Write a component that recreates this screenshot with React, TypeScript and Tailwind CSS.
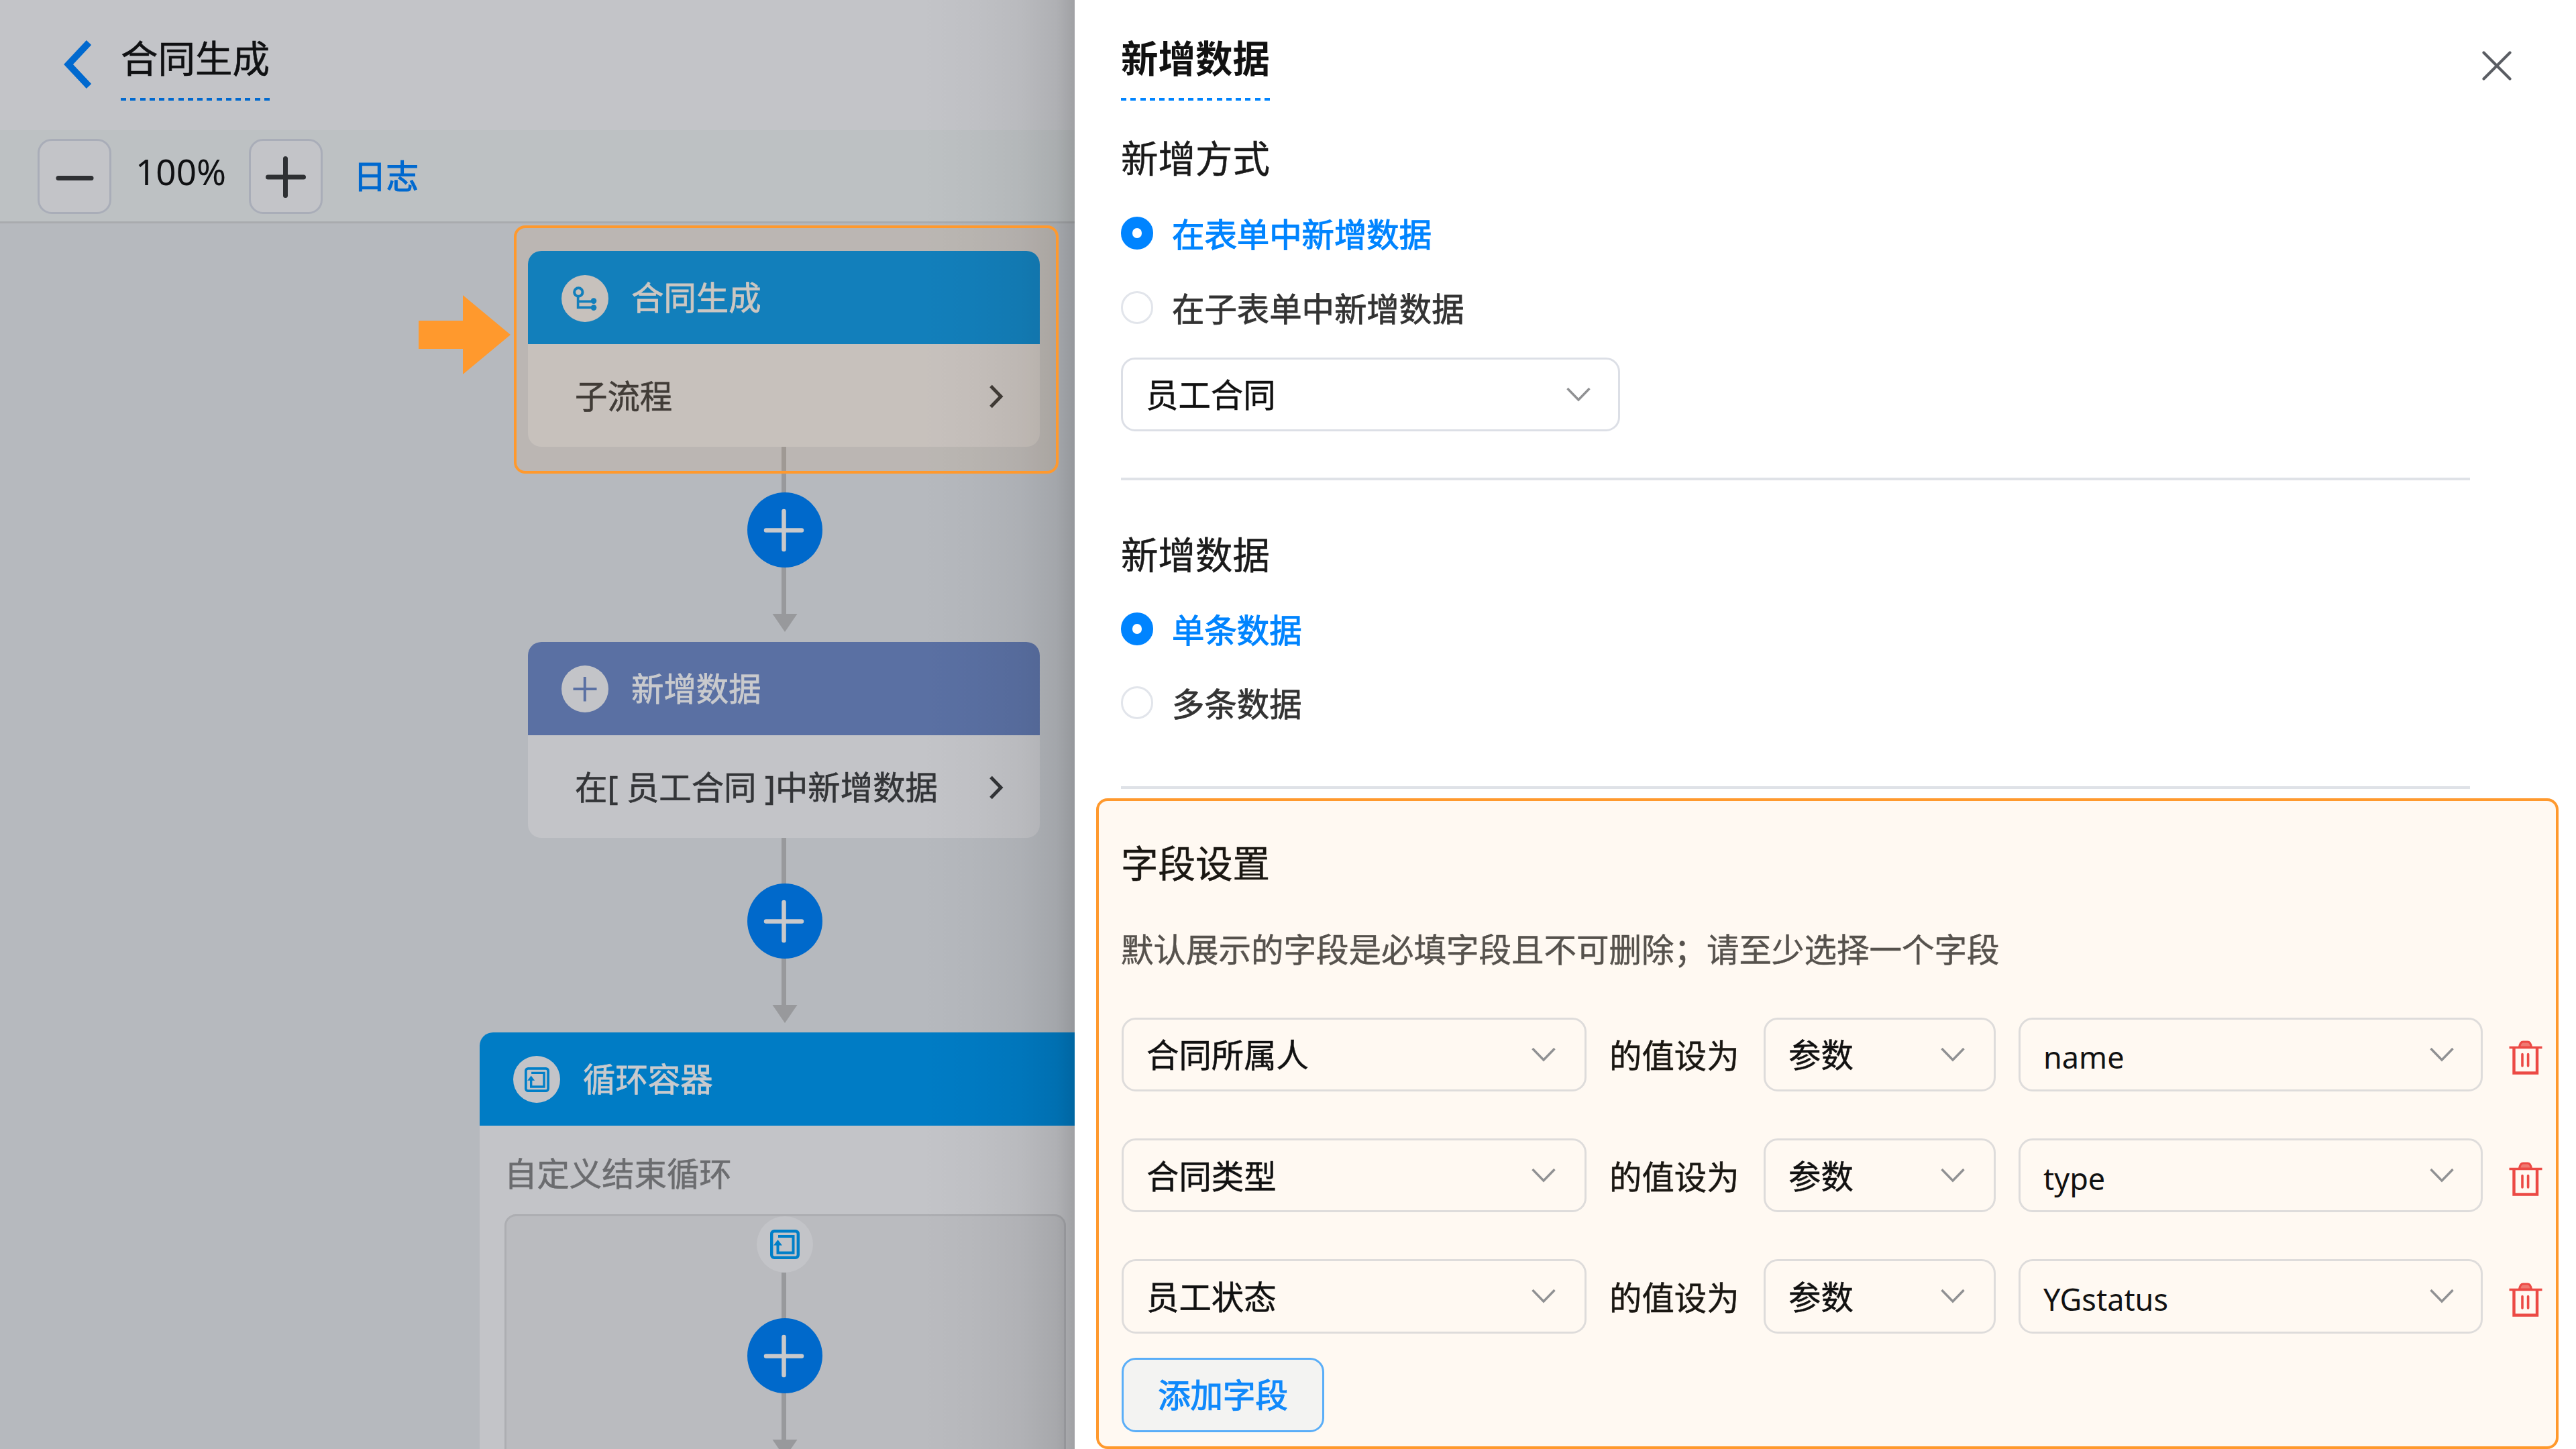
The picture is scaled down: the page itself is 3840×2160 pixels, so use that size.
import React from "react";

const FONT = "font-['Noto_Sans','Noto_Sans_CJK_SC',sans-serif]";

function DashedRule({ className }: { className: string }) {
  return <div className={`h-[4px] w-[222px] ${className}`} />;
}

/* ---------- icons ---------- */

function SubflowIcon() {
  return (
    <svg className="h-[70px] w-[70px] shrink-0" viewBox="0 0 70 70" fill="none">
      <circle cx="35" cy="35" r="35" fill="#c3c4c8" />
      <g stroke="#007dc6" strokeWidth="3.6">
        <circle cx="25.3" cy="25.5" r="6.2" strokeWidth="4" />
        <path d="M24.6 32V48.4H48M24.6 39.4H48" />
      </g>
      <circle cx="48" cy="38.6" r="4.3" fill="#007dc6" />
      <circle cx="48" cy="48.6" r="4.3" fill="#007dc6" />
    </svg>
  );
}

function AddDataIcon() {
  return (
    <svg className="h-[70px] w-[70px] shrink-0" viewBox="0 0 70 70" fill="none">
      <circle cx="35" cy="35" r="35" fill="#c3c4c8" />
      <path d="M17.5 35H52.5M34.8 17V53.5" stroke="#5a70a3" strokeWidth="4" />
    </svg>
  );
}

function LoopGlyph({ className }: { className: string }) {
  return (
    <svg className={className} viewBox="0 0 44 44" fill="none" stroke="#007fc8" strokeWidth="4.4">
      <rect x="2.2" y="2.2" width="39.6" height="39.6" rx="4" />
      <path d="M12 10H34.5V34.5H11.5V20" strokeWidth="4" />
      <path d="M5 23.500L11.500 15L18 23.500Z" fill="#007fc8" stroke="none" />
    </svg>
  );
}

function LoopIcon() {
  return (
    <div className="flex h-[70px] w-[70px] shrink-0 items-center justify-center rounded-full bg-[#c3c4c8]">
      <LoopGlyph className="h-[37px] w-[37px]" />
    </div>
  );
}

function ChevronRight() {
  return (
    <svg className="h-[36px] w-[24px] shrink-0" viewBox="0 0 24 36" fill="none">
      <path d="M4 2.5L19 18L4 33.5" stroke="#333538" strokeWidth="5" />
    </svg>
  );
}

function ChevronDown() {
  return (
    <svg className="h-[22px] w-[38px] shrink-0" viewBox="0 0 38 22" fill="none">
      <path d="M2.5 2L19 19L35.5 2" stroke="#909193" strokeWidth="3.4" />
    </svg>
  );
}

function TrashIcon() {
  return (
    <svg className="h-[52px] w-[50px] shrink-0" viewBox="0 0 50 52" fill="none" stroke="#ec4a45" strokeWidth="3.8">
      <path d="M0.5 11.5H49.5" strokeWidth="3.4" />
      <path d="M15.5 11C16.500 5 18 3 21 3H28C31 3 32.500 5 33.500 11Z" fill="#ef7a72" strokeWidth="3.2" />
      <path d="M7.500 11.500V49.500H42V11.500" strokeWidth="4.400" />
      <path d="M20 21.500V39M28.600 21.500V39" strokeLinecap="round" strokeWidth="3.600" />
    </svg>
  );
}

/* Vertical link between two nodes, with its add button and arrow head. */
function Connector({ gap }: { gap: string }) {
  return (
    <svg className={`block h-[276px] w-[112px] ${gap}`} viewBox="0 0 112 276" fill="none">
      <path d="M54.500 0V252" stroke="#98999c" strokeWidth="7" />
      <path d="M37.500 249H74.500L56 276Z" fill="#98999c" />
      <circle cx="56" cy="124" r="56" fill="#0069cb" />
      <path d="M28 124.500H81M54.500 96V153" stroke="#c9c9cb" strokeWidth="6.500" strokeLinecap="round" />
    </svg>
  );
}

/* ---------- flow canvas ---------- */

function NodeCard({
  icon,
  title,
  body,
  head,
}: {
  icon: React.ReactNode;
  title: string;
  body: string;
  head: string;
}) {
  return (
    <div className="h-[292px] w-[763px] overflow-hidden rounded-[20px] bg-[#c3c4c8]">
      <div className={`flex h-[139px] items-center gap-[34px] pl-[50px] pt-[2px] ${head}`}>
        {icon}
        <span className="-mt-[3px] text-[48.400px] leading-[70px] text-[#c9cacd] [-webkit-text-stroke:0.800px_#c9cacd]">{title}</span>
      </div>
      <div className="flex h-[153px] items-center justify-between pl-[70px] pr-[53px] pt-[3px]">
        <span className="-mt-[2px] whitespace-nowrap text-[48.400px] leading-[70px] text-[#333538] [-webkit-text-stroke:0.600px_#333538]">{body}</span>
        <ChevronRight />
      </div>
    </div>
  );
}

function ZoomButton({ plus }: { plus?: boolean }) {
  return (
    <div className="flex h-[112px] w-[110px] items-center justify-center rounded-[21px] border-[3px] border-[#a9adb8] bg-[#c3c4c8]">
      <svg className="h-[70px] w-[70px]" viewBox="0 0 70 70" fill="none" stroke="#2e3033" strokeLinecap="round" strokeWidth="7">
        {plus ? <path d="M8.500 36H61.500M34.500 8.500V63.500" /> : <path d="M11 37.500H60" />}
      </svg>
    </div>
  );
}

function FlowPane() {
  return (
    <section className="relative flex h-full w-[1602px] shrink-0 flex-col overflow-hidden bg-[#b6b9be]">
      <header className="flex h-[194px] shrink-0 items-start bg-[#c3c4c8] pl-[92px]">
        <svg className="mt-[60px] h-[72px] w-[46px]" viewBox="0 0 46 72" fill="none">
          <path d="M40.500 3.500L10 36L40.500 68.500" stroke="#0069cf" strokeWidth="10" />
        </svg>
        <div className="ml-[42px] mt-[47px] w-[222px]">
          <h1 className="whitespace-nowrap text-[55.500px] leading-[80px] text-[#101113] [-webkit-text-stroke:0.600px_#101113]">合同生成</h1>
          <DashedRule className="mt-[19px] bg-[repeating-linear-gradient(90deg,#0069cf_0_8px,transparent_8px_14.260px)]" />
        </div>
      </header>

      <div className="flex h-[139px] shrink-0 items-start border-b-[3px] border-[#a9abae] bg-[#bdc1c3] pl-[56px] pt-[13px]">
        <ZoomButton />
        <span className="ml-[36px] mt-[9px] w-[169px] text-[53px] leading-[80px] text-[#101113]">100%</span>
        <ZoomButton plus />
        <span className="ml-[46px] mt-[20px] text-[48.400px] leading-[70px] text-[#0069cf] [-webkit-text-stroke:1.200px_#0069cf]">日志</span>
      </div>

      <div className="flex flex-col items-start pl-[787px] pt-[41px]">
        <NodeCard icon={<SubflowIcon />} title="合同生成" body="子流程" head="bg-[#007dc6]" />
        <Connector gap="ml-[327px] mb-[14.500px]" />
        <NodeCard icon={<AddDataIcon />} title="新增数据" body="在[ 员工合同 ]中新增数据" head="bg-[#5a70a3]" />
        <Connector gap="ml-[327px] mb-[14px]" />
        <div className="-ml-[72px] h-[640px] w-[910px] overflow-hidden rounded-tl-[20px] bg-[#c3c4c8]">
          <div className="flex h-[139px] items-center gap-[34px] bg-[#007cc5] pl-[50px] pt-[2px]">
            <LoopIcon />
            <span className="-mt-[3px] text-[48.400px] leading-[70px] text-[#c9cacd] [-webkit-text-stroke:0.800px_#c9cacd]">循环容器</span>
          </div>
          <div className="pl-[37px] pt-[36px] text-[48.400px] leading-[70px] text-[#6b6c6f] [-webkit-text-stroke:0.600px_#6b6c6f]">自定义结束循环</div>
          <div className="ml-[37px] mt-[26px] h-[460px] w-[837px] rounded-[17px] border-[3px] border-[#adaeb2] bg-[#babbbf] pl-[359px]">
            <div className="ml-[14px] flex h-[84px] w-[84px] items-center justify-center rounded-full bg-[#c3c4c8]">
              <LoopGlyph className="h-[44px] w-[44px]" />
            </div>
            <Connector gap="" />
          </div>
        </div>
      </div>

      {/* shade cast by the drawer */}
      <div className="absolute inset-y-0 right-0 w-[230px] bg-[linear-gradient(90deg,transparent,rgba(0,0,0,0.020)_35%,rgba(0,0,0,0.050)_65%,rgba(0,0,0,0.100)_88%,rgba(0,0,0,0.180))]" />

      {/* callout round the first node */}
      <div className="absolute left-[766px] top-[336px] h-[370px] w-[812px] rounded-[17px] border-[4px] border-[#ff992d] bg-[rgba(255,153,45,0.070)]" />
      <svg className="absolute left-[624px] top-[440px] h-[118px] w-[137px]" viewBox="0 0 137 118">
        <path d="M0 38H66V0L137 59L66 118V80H0Z" fill="#ff992d" />
      </svg>
    </section>
  );
}

/* ---------- drawer ---------- */

function Radio({ label, checked }: { label: string; checked?: boolean }) {
  return (
    <div className="flex h-[110.500px] items-center">
      {checked ? (
        <span className="flex h-[49px] w-[48px] items-center justify-center rounded-full bg-[#0084ff]">
          <span className="h-[15px] w-[14px] rounded-full bg-white" />
        </span>
      ) : (
        <span className="h-[49px] w-[48px] rounded-full border-[3px] border-[#e2e5eb] bg-white" />
      )}
      <span
        className={
          checked
            ? "ml-[28px] mt-[3px] text-[48.400px] leading-[70px] text-[#0084ff] [-webkit-text-stroke:1.200px_#0084ff]"
            : "ml-[28px] mt-[3px] text-[48.400px] leading-[70px] text-[#333333] [-webkit-text-stroke:0.800px_#333333]"
        }
      >
        {label}
      </span>
    </div>
  );
}

function Select({ value, size, border, latin }: { value: string; size: string; border: string; latin?: boolean }) {
  return (
    <div className={`flex h-[110.500px] shrink-0 items-center justify-between rounded-[21px] border-[3.500px] pl-[34px] ${size} ${border}`}>
      <span
        className={
          latin
            ? "mt-[9px] text-[45px] leading-[70px] text-[#111111]"
            : "mt-[1px] text-[48.400px] leading-[70px] text-[#111111] [-webkit-text-stroke:0.500px_#111111]"
        }
      >
        {value}
      </span>
      <ChevronDown />
    </div>
  );
}

const FIELDS = [
  { field: "合同所属人", param: "name" },
  { field: "合同类型", param: "type" },
  { field: "员工状态", param: "YGstatus" },
];

function Drawer() {
  return (
    <aside className="flex h-full flex-1 flex-col bg-white">
      <div className="flex h-[190px] shrink-0 items-start justify-between pl-[69px] pr-[96px]">
        <div className="mt-[47px] w-[223px]">
          <h2 className="whitespace-nowrap text-[55.500px] font-bold leading-[80px] text-[#111111]">新增数据</h2>
          <DashedRule className="mt-[19px] bg-[repeating-linear-gradient(90deg,#0084ff_0_8px,transparent_8px_14.260px)]" />
        </div>
        <svg className="mt-[76px] h-[44px] w-[44px]" viewBox="0 0 44 44" fill="none">
          <path d="M2.500 2.500L41.500 41.500M41.500 2.500L2.500 41.500" stroke="#5a5d63" strokeWidth="4.200" strokeLinecap="round" />
        </svg>
      </div>

      <div className="shrink-0 pl-[69px]">
        <h3 className="pt-[6px] text-[55.500px] leading-[80px] text-[#1a1a1a] [-webkit-text-stroke:0.500px_#1a1a1a]">新增方式</h3>
        <div className="mt-[16.500px]">
          <Radio label="在表单中新增数据" checked />
          <Radio label="在子表单中新增数据" />
        </div>
        <div className="mt-[19px]">
          <Select value="员工合同" size="w-[744px] pr-[40px]" border="border-[#dcdfe6]" />
        </div>
        <div className="mt-[69px] h-[4px] w-[2011px] bg-[#dfe2e7]" />

        <h3 className="mt-[71px] text-[55.500px] leading-[80px] text-[#1a1a1a] [-webkit-text-stroke:0.500px_#1a1a1a]">新增数据</h3>
        <div className="mt-[15px]">
          <Radio label="单条数据" checked />
          <Radio label="多条数据" />
        </div>
        <div className="mt-[69px] h-[4px] w-[2011px] bg-[#dfe2e7]" />
      </div>

      <div className="ml-[32px] mt-[14px] h-[970px] w-[2180px] shrink-0 rounded-[17px] border-[4px] border-[#ff992d] bg-[#fff9f2] pl-[34px]">
        <h3 className="-ml-[1px] pt-[53px] text-[55.500px] leading-[80px] text-[#1a1712] [-webkit-text-stroke:0.500px_#1a1712]">字段设置</h3>
        <p className="-ml-[1px] mt-[53px] whitespace-nowrap text-[48.500px] leading-[70px] text-[#56524d] [-webkit-text-stroke:0.500px_#56524d]">
          默认展示的字段是必填字段且不可删除；请至少选择一个字段
        </p>
        <div className="mt-[66.500px] flex flex-col gap-[69.800px]">
          {FIELDS.map(({ field, param }) => (
            <div key={field} className="flex h-[110.500px] items-center">
              <Select value={field} size="w-[693px] pr-[42px]" border="border-[#dedcdb]" />
              <span className="ml-[34px] mt-[3px] w-[230px] whitespace-nowrap text-[48.400px] leading-[70px] text-[#1a1712] [-webkit-text-stroke:0.500px_#1a1712]">的值设为</span>
              <Select value="参数" size="w-[346px] pr-[42px]" border="border-[#dedcdb]" />
              <div className="w-[34px]" />
              <Select value={param} size="w-[692px] pr-[39px]" border="border-[#dedcdb]" latin />
              <div className="ml-[39px] mt-[9px]">
                <TrashIcon />
              </div>
            </div>
          ))}
        </div>
        <button className="mt-[36px] flex h-[111px] w-[302px] items-center justify-center rounded-[21px] border-[3.500px] border-[#5aaef8] bg-[#f3f3f2] text-[48.400px] leading-[70px] text-[#1089fb] [-webkit-text-stroke:1.200px_#1089fb]">
          添加字段
        </button>
      </div>
    </aside>
  );
}

export default function App() {
  return (
    <div className={`flex h-[2160px] w-[3840px] overflow-hidden bg-white ${FONT}`}>
      <FlowPane />
      <Drawer />
    </div>
  );
}
